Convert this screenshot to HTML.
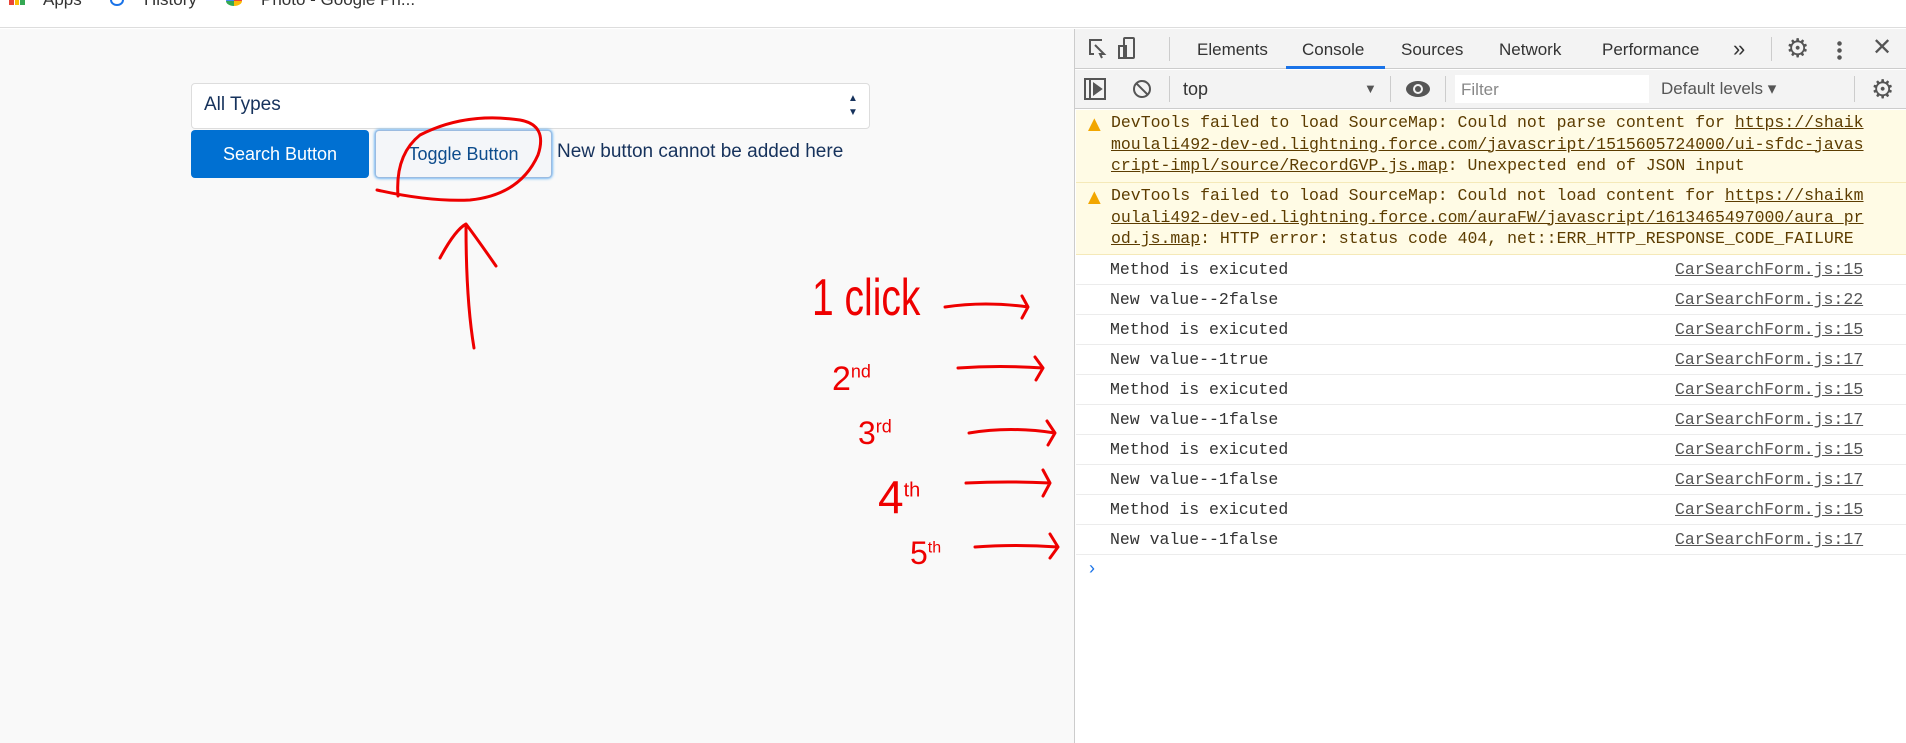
<!DOCTYPE html>
<html><head><meta charset="utf-8"><style>
*{margin:0;padding:0;box-sizing:border-box}
body{width:1906px;height:743px;overflow:hidden;background:#fff;font-family:"Liberation Sans",sans-serif;position:relative}
.a{position:absolute}
.mono{font-family:"Liberation Mono",monospace;font-size:16.5px}
.tab{position:absolute;top:40px;font-size:17px;color:#333}
.row{position:absolute;left:1076px;width:830px;height:30px;border-bottom:1px solid #ececec;background:#fff}
.row .t{position:absolute;left:34px;top:5px;color:#333}
.row .l{position:absolute;left:599px;top:5px;color:#555;text-decoration:underline}
.warn{position:absolute;left:1076px;width:830px;background:#fffbe5;border-bottom:1px solid #f5e9b8;color:#5c3c00;line-height:21.5px;padding:2px 0 0 35px}
.warn u{color:#5c3c00}
.sep{position:absolute;width:1px;background:#ccc}
</style></head><body>
<div class="a" style="left:0;top:0;width:1906px;height:28px;background:#fff;border-bottom:1px solid #ddd"></div>
<div class="a" style="left:9px;top:-3px;width:16px;height:8px;background:linear-gradient(90deg,#ea4335 30%,transparent 30%,transparent 36%,#fbbc05 36%,#fbbc05 64%,transparent 64%,transparent 70%,#34a853 70%)"></div>
<div class="a" style="left:43px;top:-10px;font-size:17px;color:#333">Apps</div>
<div class="a" style="left:110px;top:-6px;width:14px;height:12px;border:2px solid #1a73e8;border-radius:50%"></div>
<div class="a" style="left:144px;top:-10px;font-size:17px;color:#333">History</div>
<div class="a" style="left:226px;top:-4px;width:16px;height:10px;background:conic-gradient(#ea4335 0 25%,#fbbc05 0 50%,#34a853 0 75%,#4285f4 0);border-radius:50%"></div>
<div class="a" style="left:261px;top:-10px;font-size:17px;color:#333">Photo - Google Ph...</div>
<div class="a" style="left:0;top:29px;width:1075px;height:714px;background:#f9f9f9"></div>
<div class="a" style="left:191px;top:83px;width:679px;height:46px;background:#fff;border:1px solid #ddd;border-radius:4px"></div>
<div class="a" style="left:204px;top:94px;font-size:19px;color:#16325c">All Types</div>
<div class="a" style="left:848px;top:92px;font-size:10px;color:#16325c;line-height:14px">▲<br>▼</div>
<div class="a" style="left:191px;top:130px;width:178px;height:48px;background:#0070d2;border-radius:4px;color:#fff;font-size:18px;text-align:center;line-height:48px">Search Button</div>
<div class="a" style="left:375px;top:130px;width:177px;height:48px;background:#f4f6f9;border:1px solid #9bbbe0;border-radius:4px;color:#0d4c8c;font-size:18px;text-align:center;line-height:46px;box-shadow:0 0 3px #1589ee">Toggle Button</div>
<div class="a" style="left:557px;top:141px;font-size:19px;color:#16325c">New button cannot be added here</div>
<div class="a" style="left:1074px;top:29px;width:1px;height:714px;background:#ccc"></div>
<div class="a" style="left:1075px;top:29px;width:831px;height:40px;background:#f3f3f3;border-bottom:1px solid #ccc"></div>
<svg class="a" style="left:1080px;top:34px" width="60" height="30" fill="none" stroke="#555" stroke-width="2"><path d="M10 16V6h12M10 6v14h4"/><path d="M15 11l9 9-4 0 2 4"/><rect x="44" y="4" width="10" height="20" rx="1"/><rect x="39" y="12" width="7" height="12"/></svg>
<div class="sep" style="left:1169px;top:37px;height:24px"></div>
<div class="tab" style="left:1197px">Elements</div>
<div class="tab" style="left:1302px">Console</div>
<div class="a" style="left:1286px;top:66px;width:99px;height:3px;background:#1a73e8"></div>
<div class="tab" style="left:1401px">Sources</div>
<div class="tab" style="left:1499px">Network</div>
<div class="tab" style="left:1602px">Performance</div>
<div class="tab" style="left:1733px;top:36px;font-size:22px">»</div>
<div class="sep" style="left:1771px;top:37px;height:24px"></div>
<div class="a" style="left:1786px;top:33px;font-size:26px;color:#555">⚙</div>
<div class="a" style="left:1837px;top:40px;width:5px;height:20px;background:radial-gradient(circle,#555 2px,transparent 2.5px) 0 0/5px 7px"></div>
<div class="a" style="left:1872px;top:33px;font-size:24px;color:#555">✕</div>
<div class="a" style="left:1075px;top:70px;width:831px;height:39px;background:#f3f3f3;border-bottom:1px solid #ccc"></div>
<svg class="a" style="left:1083px;top:76px" width="90" height="26" fill="none" stroke="#555" stroke-width="2"><rect x="2" y="3" width="20" height="20"/><path d="M7 3v20"/><path d="M11 8l7 5-7 5z" fill="#555"/><circle cx="59" cy="13" r="8"/><path d="M53 7l12 12"/></svg>
<div class="sep" style="left:1169px;top:76px;height:26px"></div>
<div class="a" style="left:1183px;top:79px;font-size:18px;color:#333">top</div>
<div class="a" style="left:1364px;top:81px;font-size:13px;color:#555">▼</div>
<div class="sep" style="left:1390px;top:76px;height:26px"></div>
<svg class="a" style="left:1405px;top:78px" width="26" height="22"><ellipse cx="13" cy="11" rx="12" ry="8" fill="#555"/><circle cx="13" cy="11" r="5" fill="#f3f3f3"/><circle cx="13" cy="11" r="3" fill="#555"/></svg>
<div class="sep" style="left:1445px;top:76px;height:26px"></div>
<div class="a" style="left:1455px;top:75px;width:194px;height:28px;background:#fff"></div>
<div class="a" style="left:1461px;top:80px;font-size:17px;color:#888">Filter</div>
<div class="a" style="left:1661px;top:79px;font-size:17px;color:#555">Default levels ▾</div>
<div class="sep" style="left:1854px;top:76px;height:26px"></div>
<div class="a" style="left:1871px;top:74px;font-size:26px;color:#555">⚙</div>
<div class="a" style="left:1075px;top:110px;width:831px;height:633px;background:#fff"></div>
<div class="warn mono" style="top:110px;height:73px"><span class="a" style="left:12px;top:3px;color:#f2a600;font-family:'DejaVu Sans'">▲</span>DevTools failed to load SourceMap: Could not parse content for <u>https://shaik<br>moulali492-dev-ed.lightning.force.com/javascript/1515605724000/ui-sfdc-javas<br>cript-impl/source/RecordGVP.js.map</u>: Unexpected end of JSON input</div>
<div class="warn mono" style="top:183px;height:72px"><span class="a" style="left:12px;top:3px;color:#f2a600;font-family:'DejaVu Sans'">▲</span>DevTools failed to load SourceMap: Could not load content for <u>https://shaikm<br>oulali492-dev-ed.lightning.force.com/auraFW/javascript/1613465497000/aura_pr<br>od.js.map</u>: HTTP error: status code 404, net::ERR_HTTP_RESPONSE_CODE_FAILURE</div>
<div class="row mono" style="top:255px"><span class="t">Method is exicuted</span><span class="l">CarSearchForm.js:15</span></div>
<div class="row mono" style="top:285px"><span class="t">New value--2false</span><span class="l">CarSearchForm.js:22</span></div>
<div class="row mono" style="top:315px"><span class="t">Method is exicuted</span><span class="l">CarSearchForm.js:15</span></div>
<div class="row mono" style="top:345px"><span class="t">New value--1true</span><span class="l">CarSearchForm.js:17</span></div>
<div class="row mono" style="top:375px"><span class="t">Method is exicuted</span><span class="l">CarSearchForm.js:15</span></div>
<div class="row mono" style="top:405px"><span class="t">New value--1false</span><span class="l">CarSearchForm.js:17</span></div>
<div class="row mono" style="top:435px"><span class="t">Method is exicuted</span><span class="l">CarSearchForm.js:15</span></div>
<div class="row mono" style="top:465px"><span class="t">New value--1false</span><span class="l">CarSearchForm.js:17</span></div>
<div class="row mono" style="top:495px"><span class="t">Method is exicuted</span><span class="l">CarSearchForm.js:15</span></div>
<div class="row mono" style="top:525px"><span class="t">New value--1false</span><span class="l">CarSearchForm.js:17</span></div>
<div class="a" style="left:1089px;top:558px;font-size:18px;color:#1a73e8">›</div>
<svg class="a" style="left:0;top:0" width="1906" height="743" fill="none" stroke="#e00" stroke-width="3" stroke-linecap="round" stroke-linejoin="round">
<path d="M377 190 Q430 202 470 200 Q520 195 538 155 Q548 125 520 120 Q465 112 420 135 Q395 155 398 196"/>
<path d="M474 348 Q466 300 466 226 M440 258 Q455 230 466 224 Q478 240 496 266"/>
<path d="M945 307 Q985 301 1028 307 M1022 296 L1028 307 L1022 318"/>
<path d="M958 368 Q1000 365 1043 368 M1035 357 L1043 368 L1036 380"/>
<path d="M969 433 Q1010 426 1055 433 M1047 421 L1055 433 L1048 445"/>
<path d="M966 483 Q1008 481 1050 483 M1043 470 L1050 483 L1043 496"/>
<path d="M975 547 Q1015 544 1058 547 M1050 534 L1058 547 L1050 558"/>
</svg>
<div class="a" style="left:812px;top:268px;font-size:52px;color:#e00;transform:scaleX(0.75);transform-origin:left;line-height:60px">1 click</div>
<div class="a" style="left:832px;top:360px;font-size:34px;color:#e00">2<sup style="font-size:18px">nd</sup></div>
<div class="a" style="left:858px;top:415px;font-size:32px;color:#e00">3<sup style="font-size:18px">rd</sup></div>
<div class="a" style="left:878px;top:470px;font-size:46px;color:#e00">4<sup style="font-size:20px">th</sup></div>
<div class="a" style="left:910px;top:535px;font-size:32px;color:#e00">5<sup style="font-size:16px">th</sup></div>
</body></html>
